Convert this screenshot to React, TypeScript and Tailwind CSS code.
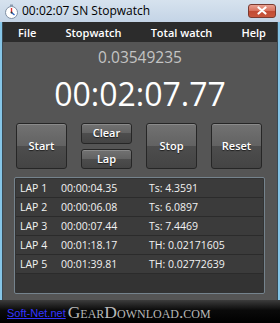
import React from "react";

const font = { fontFamily: '"Open Sans", "Noto Sans", sans-serif' };

function Btn({ label, h }: { label: string; h: string }) {
  return (
    <div
      className={`w-[51px] ${h} rounded-[3px] border border-[#262626] bg-[linear-gradient(to_bottom,#727272_0%,#626262_50%,#4d4d4d_50%,#444444_100%)] shadow-[inset_0_1px_0_rgba(255,255,255,0.18)] flex items-center justify-center text-[11px] font-semibold text-white [text-shadow:0_1px_1px_rgba(0,0,0,0.6)]`}
    >
      {label}
    </div>
  );
}

const laps = [
  ["LAP 1", "00:00:04.35", "Ts: 4.3591"],
  ["LAP 2", "00:00:06.08", "Ts: 6.0897"],
  ["LAP 3", "00:00:07.44", "Ts: 7.4469"],
  ["LAP 4", "00:01:18.17", "TH: 0.02171605"],
  ["LAP 5", "00:01:39.81", "TH: 0.02772639"],
];

export default function App() {
  return (
    <div className="w-[280px] h-[323px] flex flex-col overflow-hidden bg-[#c9d8e9]" style={font}>
      {/* title bar */}
      <div className="h-[22px] flex items-center pl-[4px] pr-[4px] bg-[linear-gradient(to_bottom,#d6e2ee,#c4d4e6)] relative">
        <svg width="15" height="15" viewBox="0 0 15 15" className="mr-[3px]">
          <rect x="6" y="0.5" width="3" height="2" fill="#8a9bb0" />
          <circle cx="7.5" cy="8.5" r="6" fill="#ffffff" stroke="#7f8fa3" strokeWidth="1" />
          <path d="M7.5 8.5 L7.5 4" stroke="#d33" strokeWidth="1.4" />
          <path d="M7.5 8.5 L10.5 11" stroke="#2a63c4" strokeWidth="1.4" />
          <circle cx="7.5" cy="8.5" r="1" fill="#333" />
        </svg>
        <span className="text-[12px] text-black leading-none">00:02:07 SN Stopwatch</span>
        <div className="ml-auto w-[28px] h-[14px] rounded-[3px] border border-[#7a3a30] bg-[linear-gradient(to_bottom,#e8a091_0%,#d8705c_50%,#c24a33_50%,#c9563c_100%)] flex items-center justify-center mt-[-1px]">
          <svg width="10" height="9" viewBox="0 0 10 9">
            <path d="M1.5 1.5 L8.5 7.5 M8.5 1.5 L1.5 7.5" stroke="#fff" strokeWidth="2.2" strokeLinecap="round" />
          </svg>
        </div>
      </div>
      {/* window body */}
      <div className="flex-1 flex flex-col px-[2px] bg-[#86c6e8]">
        <div className="flex-1 flex flex-col border-x border-[#3a4a55]">
          {/* menu */}
          <div className="h-[20px] bg-[#2c2c2c] flex items-center justify-between pl-[15px] pr-[11px] text-[11px] font-semibold text-white leading-none">
            <span>File</span>
            <span>Stopwatch</span>
            <span>Total watch</span>
            <span>Help</span>
          </div>
          {/* content */}
          <div className="flex-1 bg-[#555555] flex flex-col">
            <div className="h-[19px] mt-[6px] flex items-center justify-center text-[15.5px] text-[#c4c4c4] leading-none">
              0.03549235
            </div>
            <div className="h-[48px] flex items-center justify-center text-[32px] text-white leading-none mt-[3px]">
              00:02:07.77
            </div>
            <div className="mt-[5px] flex pl-[13px] gap-[14px]">
              <Btn label="Start" h="h-[46px]" />
              <div className="flex flex-col gap-[5px]">
                <Btn label="Clear" h="h-[21px]" />
                <Btn label="Lap" h="h-[20px]" />
              </div>
              <Btn label="Stop" h="h-[46px]" />
              <Btn label="Reset" h="h-[46px]" />
            </div>
            <div className="mt-[8px] ml-[11px] w-[251px] h-[117px] rounded-[2px] border border-[#75838d] bg-[#333333] p-[1px] flex flex-col">
              {laps.map((l, i) => (
                <div
                  key={i}
                  className="h-[19px] flex items-center bg-[#3b3b3b] border-b border-[#2b2b2b] text-[10.5px] text-[#f2f2f2] leading-none"
                >
                  <span className="w-[45px] pl-[4px]">{l[0]}</span>
                  <span className="w-[88px]">{l[1]}</span>
                  <span>{l[2]}</span>
                </div>
              ))}
            </div>
          </div>
        </div>
      </div>
      {/* watermark */}
      <div className="h-[23px] flex items-end pl-[7px] pb-[2px] bg-[linear-gradient(to_bottom,#3c3c3c_0%,#0a0a0a_45%,#000_100%)]">
        <span
          className="text-[11px] text-[#3535ff] underline leading-none mb-[2px]"
          style={{ fontFamily: '"Liberation Sans", sans-serif' }}
        >
          Soft-Net.net
        </span>
        <span
          className="ml-[2px] text-[17.5px] text-[#b8b8b8] leading-none [font-variant:small-caps]"
          style={{ fontFamily: '"Liberation Serif", serif' }}
        >
          GearDownload.com
        </span>
      </div>
    </div>
  );
}
